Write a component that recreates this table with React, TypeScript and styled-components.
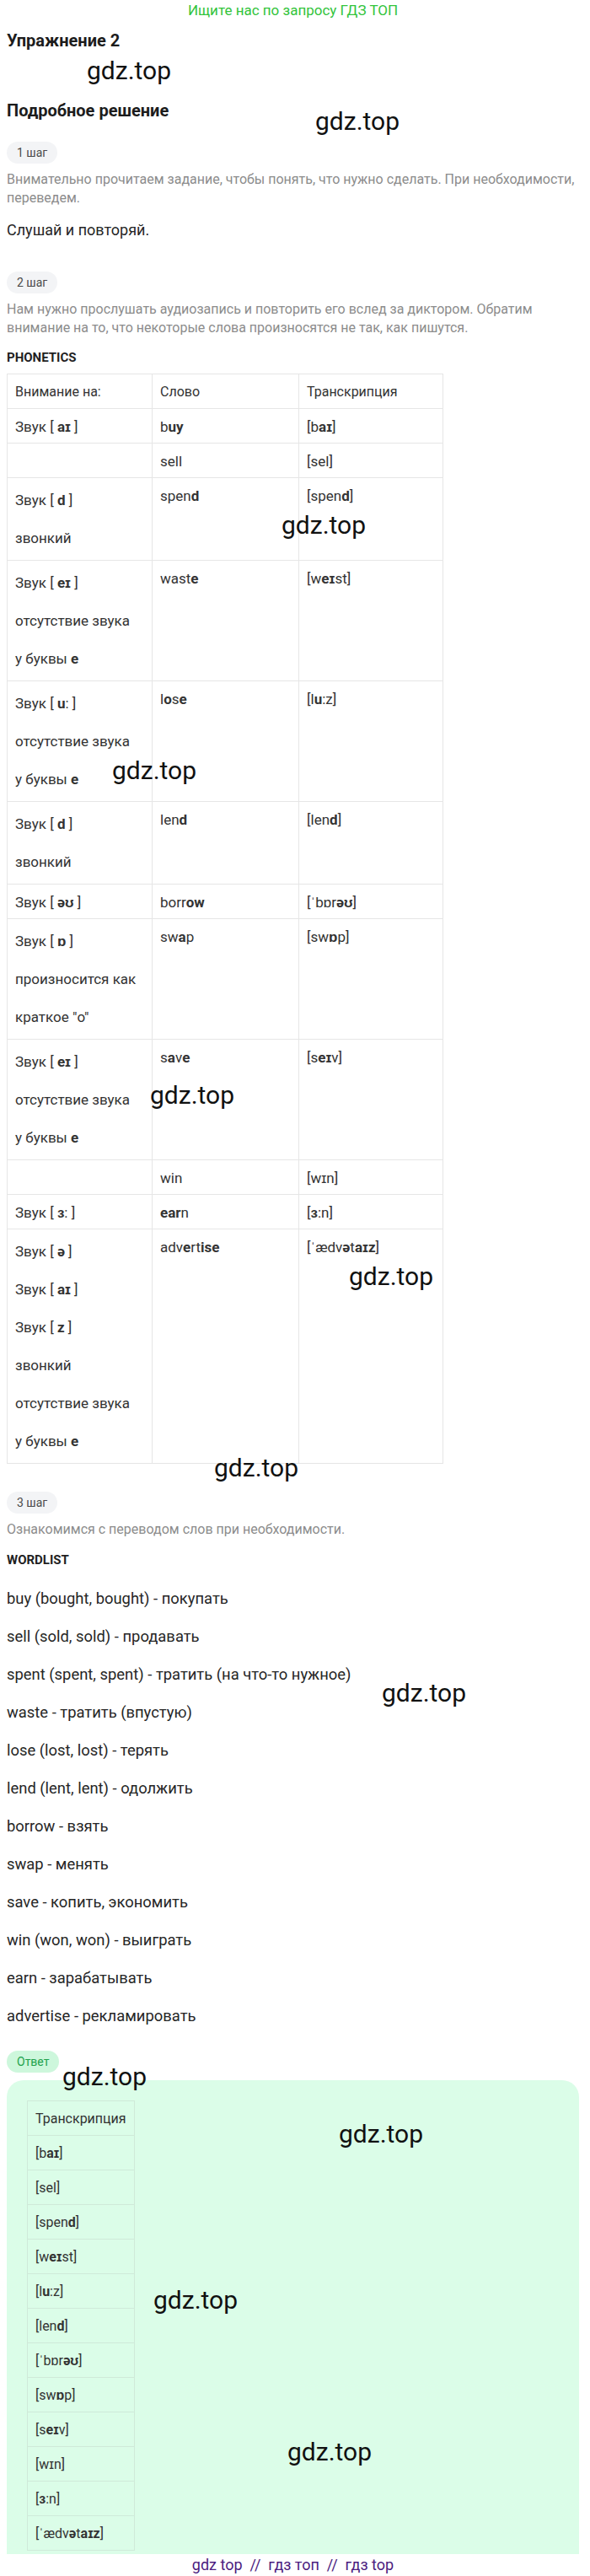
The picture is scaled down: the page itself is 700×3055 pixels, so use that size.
import React from "react";
import styled, { createGlobalStyle } from "styled-components";

const GlobalStyle = createGlobalStyle`
  html, body {
    margin: 0;
    padding: 0;
    background: #fff;
  }
  body {
    font-family: Roboto, "Liberation Sans", "DejaVu Sans", sans-serif;
    color: #222;
  }
  * {
    box-sizing: border-box;
  }
`;

type Row = {
  notes: React.ReactNode[];
  word: React.ReactNode;
  trans: React.ReactNode;
};

const rows: Row[] = [
  { notes: [<>Звук [ <b>aɪ</b> ]</>], word: <>b<b>uy</b></>, trans: <>[b<b>aɪ</b>]</> },
  { notes: [], word: "sell", trans: "[sel]" },
  {
    notes: [<>Звук [ <b>d</b> ]</>, "звонкий"],
    word: <>spen<b>d</b></>,
    trans: <>[spen<b>d</b>]</>,
  },
  {
    notes: [<>Звук [ <b>eɪ</b> ]</>, "отсутствие звука", <>у буквы <b>e</b></>],
    word: <>wast<b>e</b></>,
    trans: <>[w<b>eɪ</b>st]</>,
  },
  {
    notes: [<>Звук [ <b>u</b>: ]</>, "отсутствие звука", <>у буквы <b>e</b></>],
    word: <>l<b>o</b>s<b>e</b></>,
    trans: <>[l<b>u</b>:z]</>,
  },
  {
    notes: [<>Звук [ <b>d</b> ]</>, "звонкий"],
    word: <>len<b>d</b></>,
    trans: <>[len<b>d</b>]</>,
  },
  { notes: [<>Звук [ <b>əʊ</b> ]</>], word: <>borr<b>ow</b></>, trans: <>[ˈbɒr<b>əʊ</b>]</> },
  {
    notes: [<>Звук [ <b>ɒ</b> ]</>, "произносится как", 'краткое "o"'],
    word: <>sw<b>a</b>p</>,
    trans: <>[sw<b>ɒ</b>p]</>,
  },
  {
    notes: [<>Звук [ <b>eɪ</b> ]</>, "отсутствие звука", <>у буквы <b>e</b></>],
    word: <>s<b>a</b>v<b>e</b></>,
    trans: <>[s<b>eɪ</b>v]</>,
  },
  { notes: [], word: "win", trans: "[wɪn]" },
  { notes: [<>Звук [ <b>ɜ</b>: ]</>], word: <><b>ear</b>n</>, trans: <>[<b>ɜ</b>:n]</> },
  {
    notes: [
      <>Звук [ <b>ə</b> ]</>,
      <>Звук [ <b>aɪ</b> ]</>,
      <>Звук [ <b>z</b> ]</>,
      "звонкий",
      "отсутствие звука",
      <>у буквы <b>e</b></>,
    ],
    word: <>adv<b>e</b>rt<b>ise</b></>,
    trans: <>[ˈædv<b>ə</b>t<b>aɪz</b>]</>,
  },
];

const words = [
  "buy (bought, bought) - покупать",
  "sell (sold, sold) - продавать",
  "spent (spent, spent) - тратить (на что-то нужное)",
  "waste - тратить (впустую)",
  "lose (lost, lost) - терять",
  "lend (lent, lent) - одолжить",
  "borrow - взять",
  "swap - менять",
  "save - копить, экономить",
  "win (won, won) - выиграть",
  "earn - зарабатывать",
  "advertise - рекламировать",
];

// watermark positions over the page
const marks = [
  [103, 69],
  [374, 129],
  [334, 608],
  [133, 899],
  [178, 1284],
  [414, 1499],
  [254, 1726],
  [453, 1993],
  [74, 2448],
  [402, 2516],
  [182, 2713],
  [341, 2893],
];

export default function App() {
  return (
    <>
      <GlobalStyle />
      <Page>
        <Banner>Ищите нас по запросу ГДЗ ТОП</Banner>
        <Title>Упражнение 2</Title>
        <Subtitle>Подробное решение</Subtitle>

        <Step>1 шаг</Step>
        <Hint>
          Внимательно прочитаем задание, чтобы понять, что нужно сделать. При
          необходимости, переведем.
        </Hint>
        <Text>Слушай и повторяй.</Text>

        <Step $gap={36}>2 шаг</Step>
        <Hint>
          Нам нужно прослушать аудиозапись и повторить его вслед за диктором.
          Обратим внимание на то, что некоторые слова произносятся не так, как
          пишутся.
        </Hint>
        <Caps>PHONETICS</Caps>
        <Table>
          <colgroup>
            <Col $w={172} />
            <Col $w={174} />
            <Col $w={171} />
          </colgroup>
          <tbody>
            <tr>
              <Cell $head>Внимание на:</Cell>
              <Cell $head>Слово</Cell>
              <Cell $head>Транскрипция</Cell>
            </tr>
            {rows.map((r, i) => (
              <tr key={i}>
                <Cell>
                  {r.notes.length > 1 ? (
                    <Notes>
                      {r.notes.map((n, j) => (
                        <div key={j}>{n}</div>
                      ))}
                    </Notes>
                  ) : (
                    r.notes[0]
                  )}
                </Cell>
                <Cell>{r.word}</Cell>
                <Cell>{r.trans}</Cell>
              </tr>
            ))}
          </tbody>
        </Table>

        <Step $gap={33}>3 шаг</Step>
        <Hint>Ознакомимся с переводом слов при необходимости.</Hint>
        <Caps $gap={13}>WORDLIST</Caps>
        <WordList>
          {words.map((w) => (
            <Word key={w}>{w}</Word>
          ))}
        </WordList>

        <Step $gap={28} $green>
          Ответ
        </Step>
        <AnswerBox>
          <AnswerTable>
            <tbody>
              <tr>
                <AnswerCell>Транскрипция</AnswerCell>
              </tr>
              {rows.map((r, i) => (
                <tr key={i}>
                  <AnswerCell>{r.trans}</AnswerCell>
                </tr>
              ))}
            </tbody>
          </AnswerTable>
        </AnswerBox>
        <Footer>{"gdz top  //  гдз топ  //  гдз top"}</Footer>

        {marks.map(([x, y], i) => (
          <Mark key={i} $x={x} $y={y}>
            gdz.top
          </Mark>
        ))}
      </Page>
    </>
  );
}

const Page = styled.div`
  position: relative;
  width: 700px;
  min-height: 3055px;
  padding: 0 13px 0 8px;
  overflow: hidden;
`;

const Banner = styled.div`
  height: 24px;
  line-height: 24px;
  text-align: center;
  font-size: 17px;
  color: #33c43c;
`;

const Title = styled.h1`
  margin: 9px 0 0;
  font-size: 20px;
  line-height: 30px;
  font-weight: 700;
  color: #1c1c1c;
`;

const Subtitle = styled.h2`
  margin: 53px 0 0;
  font-size: 20px;
  line-height: 30px;
  font-weight: 700;
  color: #1c1c1c;
`;

const Step = styled.div<{ $gap?: number; $green?: boolean }>`
  display: inline-flex;
  align-items: center;
  height: 26px;
  margin-top: ${(p) => p.$gap ?? 22}px;
  padding: 0 12px;
  border-radius: 13px;
  font-size: 14px;
  background: ${(p) => (p.$green ? "#cdf7dc" : "#f3f4f6")};
  color: ${(p) => (p.$green ? "#22a24c" : "#4a4a4a")};
`;

const Hint = styled.p`
  margin: 8px 0 0;
  font-size: 16px;
  line-height: 22px;
  color: #8c8c8c;
`;

const Text = styled.p`
  margin: 14px 0 0;
  font-size: 18px;
  line-height: 26px;
  color: #262626;
`;

const Caps = styled.div<{ $gap?: number }>`
  margin-top: ${(p) => p.$gap ?? 12}px;
  font-size: 15px;
  line-height: 24px;
  font-weight: 700;
  color: #1f1f1f;
`;

const Table = styled.table`
  margin-top: 7px;
  width: 517px;
  table-layout: fixed;
  border-collapse: collapse;
  color: #333;
`;

const Col = styled.col<{ $w: number }>`
  width: ${(p) => p.$w}px;
`;

const Cell = styled.td<{ $head?: boolean }>`
  border: 1px solid #e6e6e6;
  padding: 10px 9px 8px;
  line-height: 22px;
  vertical-align: top;
  font-size: ${(p) => (p.$head ? 16 : 17)}px;

  b {
    font-weight: 700;
  }
`;

const Notes = styled.div`
  display: flex;
  flex-direction: column;
  gap: 23px;
  padding: 5px 0 7px;
`;

const WordList = styled.div`
  display: flex;
  flex-direction: column;
  gap: 19px;
  margin-top: 21px;
`;

const Word = styled.p`
  margin: 0;
  font-size: 18.4px;
  line-height: 26px;
  color: #262626;
`;

const AnswerBox = styled.div`
  margin-top: 9px;
  padding: 24px 24px 4px;
  background: #dbfde8;
  border-radius: 20px 20px 0 0;
`;

const AnswerTable = styled.table`
  width: 126px;
  border-collapse: collapse;
  color: #333;
`;

const AnswerCell = styled.td`
  border: 1px solid #cfead9;
  padding: 10px 9px 8px;
  line-height: 22px;
  font-size: 16px;
  white-space: nowrap;

  b {
    font-weight: 700;
  }
`;

const Footer = styled.div`
  margin-top: 1px;
  text-align: center;
  font-size: 18px;
  line-height: 24px;
  white-space: pre;
  color: #4b1c80;
`;

const Mark = styled.span<{ $x: number; $y: number }>`
  position: absolute;
  left: ${(p) => p.$x}px;
  top: ${(p) => p.$y}px;
  font-family: Roboto, "Liberation Sans", sans-serif;
  font-size: 30px;
  line-height: 30px;
  color: #111;
  pointer-events: none;
`;
